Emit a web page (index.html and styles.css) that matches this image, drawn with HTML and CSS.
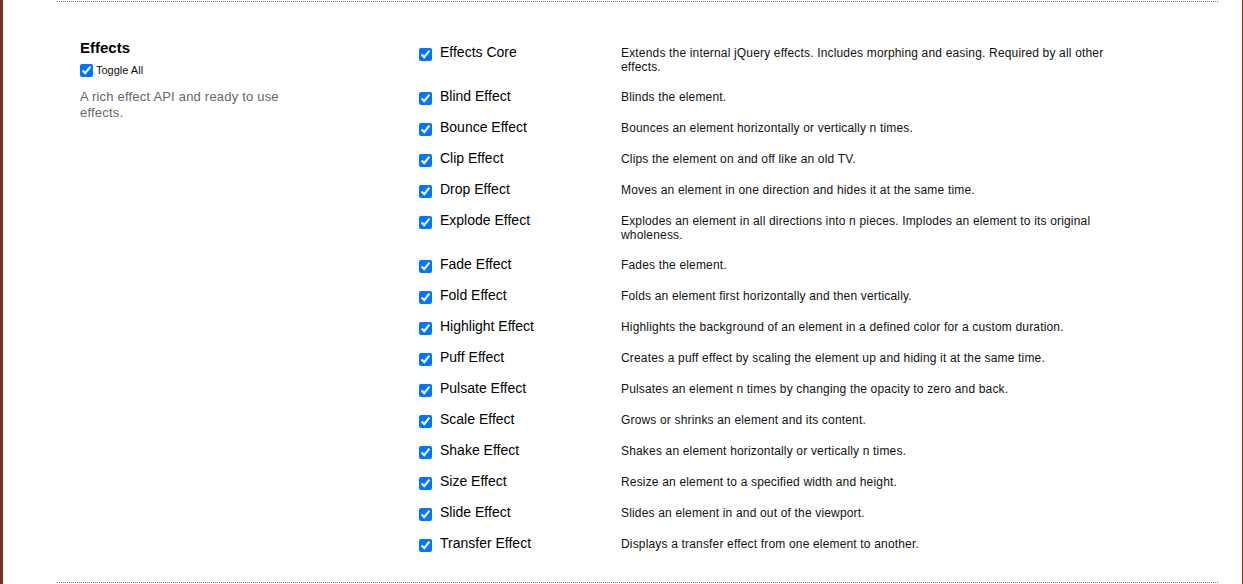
FILE: index.html
```html
<!DOCTYPE html>
<html lang="en">
<head>
<meta charset="utf-8">
<title>Effects</title>
<link rel="stylesheet" href="styles.css">
</head>
<body>
<div class="page">
  <section class="group">
    <div class="group-info">
      <h2 class="group-title">Effects</h2>
      <label class="toggle"><input type="checkbox" checked><span>Toggle All</span></label>
      <p class="group-desc">A rich effect API and ready to use effects.</p>
    </div>
    <ul class="components">
      <li class="component"><label class="comp-label"><input type="checkbox" checked><span>Effects Core</span></label><p class="comp-desc">Extends the internal jQuery effects. Includes morphing and easing. Required by all other effects.</p></li>
      <li class="component"><label class="comp-label"><input type="checkbox" checked><span>Blind Effect</span></label><p class="comp-desc">Blinds the element.</p></li>
      <li class="component"><label class="comp-label"><input type="checkbox" checked><span>Bounce Effect</span></label><p class="comp-desc">Bounces an element horizontally or vertically n times.</p></li>
      <li class="component"><label class="comp-label"><input type="checkbox" checked><span>Clip Effect</span></label><p class="comp-desc">Clips the element on and off like an old TV.</p></li>
      <li class="component"><label class="comp-label"><input type="checkbox" checked><span>Drop Effect</span></label><p class="comp-desc">Moves an element in one direction and hides it at the same time.</p></li>
      <li class="component"><label class="comp-label"><input type="checkbox" checked><span>Explode Effect</span></label><p class="comp-desc">Explodes an element in all directions into n pieces. Implodes an element to its original wholeness.</p></li>
      <li class="component"><label class="comp-label"><input type="checkbox" checked><span>Fade Effect</span></label><p class="comp-desc">Fades the element.</p></li>
      <li class="component"><label class="comp-label"><input type="checkbox" checked><span>Fold Effect</span></label><p class="comp-desc">Folds an element first horizontally and then vertically.</p></li>
      <li class="component"><label class="comp-label"><input type="checkbox" checked><span>Highlight Effect</span></label><p class="comp-desc">Highlights the background of an element in a defined color for a custom duration.</p></li>
      <li class="component"><label class="comp-label"><input type="checkbox" checked><span>Puff Effect</span></label><p class="comp-desc">Creates a puff effect by scaling the element up and hiding it at the same time.</p></li>
      <li class="component"><label class="comp-label"><input type="checkbox" checked><span>Pulsate Effect</span></label><p class="comp-desc">Pulsates an element n times by changing the opacity to zero and back.</p></li>
      <li class="component"><label class="comp-label"><input type="checkbox" checked><span>Scale Effect</span></label><p class="comp-desc">Grows or shrinks an element and its content.</p></li>
      <li class="component"><label class="comp-label"><input type="checkbox" checked><span>Shake Effect</span></label><p class="comp-desc">Shakes an element horizontally or vertically n times.</p></li>
      <li class="component"><label class="comp-label"><input type="checkbox" checked><span>Size Effect</span></label><p class="comp-desc">Resize an element to a specified width and height.</p></li>
      <li class="component"><label class="comp-label"><input type="checkbox" checked><span>Slide Effect</span></label><p class="comp-desc">Slides an element in and out of the viewport.</p></li>
      <li class="component"><label class="comp-label"><input type="checkbox" checked><span>Transfer Effect</span></label><p class="comp-desc">Displays a transfer effect from one element to another.</p></li>
    </ul>
  </section>
</div>
</body>
</html>
```
FILE: styles.css
```css
html, body {
  margin: 0;
  padding: 0;
}
body {
  background: #7a321c;
  font-family: "Liberation Sans", Arial, sans-serif;
  color: #111;
}
.page {
  margin: 0 1px 0 3px;
  background: #fff;
  height: 584px;
  padding: 1px 24px 0 54px;
  box-sizing: border-box;
}
.group {
  border-top: 1px dotted #777;
  border-bottom: 1px dotted #777;
  height: 582px;
  box-sizing: border-box;
  display: flex;
  padding: 0 0 0 23px;
}
.group-info {
  width: 339px;
  flex: none;
  padding-top: 36px;
}
.group-title {
  margin: 0;
  font-size: 15px;
  line-height: 20px;
  font-weight: bold;
  color: #000;
}
.toggle {
  display: flex;
  align-items: center;
  font-size: 11px;
  line-height: 14px;
  color: #111;
  margin-top: 5px;
}
.toggle input {
  margin: 0 3px 0 0;
  width: 13px;
  height: 13px;
}
.group-desc {
  margin: 12px 0 0;
  width: 220px;
  font-size: 13px;
  line-height: 16px;
  letter-spacing: 0.2px;
  color: #666;
}
.components {
  list-style: none;
  margin: 0;
  padding: 41px 0 0;
  display: flex;
  flex-direction: column;
  gap: 13px;
}
.component {
  display: flex;
  align-items: flex-start;
}
.comp-label {
  width: 202px;
  height: 18px;
  flex: none;
  display: flex;
  align-items: flex-start;
  font-size: 14px;
  line-height: 18px;
  color: #000;
}
.comp-label input {
  margin: 5px 8px 0 0;
  width: 13px;
  height: 13px;
  flex: none;
}
.comp-desc {
  margin: 0;
  padding-top: 3px;
  width: 500px;
  font-size: 12px;
  line-height: 14px;
  letter-spacing: 0.17px;
  color: #111;
}
```
